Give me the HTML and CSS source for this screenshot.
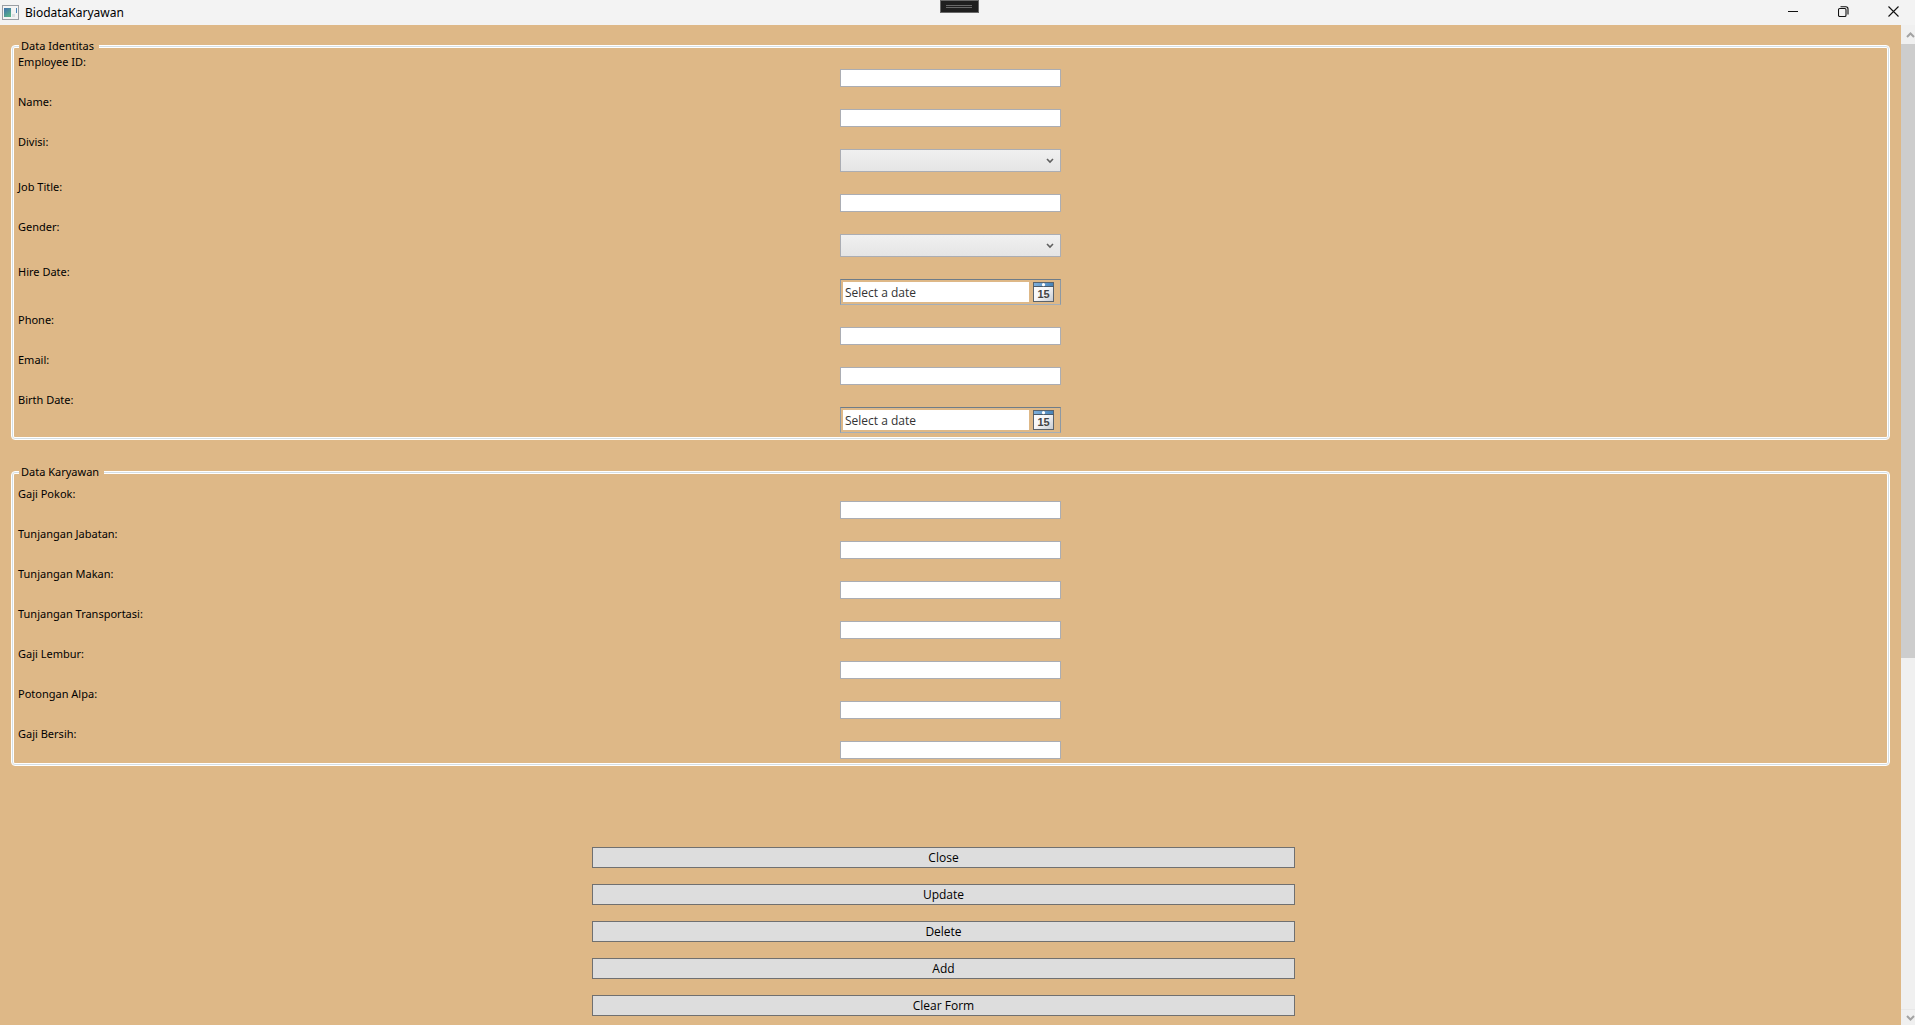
FILE: index.html
```html
<!DOCTYPE html>
<html lang="id">
<head>
<meta charset="utf-8">
<title>BiodataKaryawan</title>
<link rel="stylesheet" href="styles.css">
</head>
<body>
<div class="window">
  <header class="titlebar">
    <svg class="app-icon" width="17" height="15" viewBox="0 0 17 15" aria-hidden="true">
      <defs><linearGradient id="app" x1="0" y1="0" x2="0.6" y2="1"><stop offset="0" stop-color="#3f6fae"/><stop offset="1" stop-color="#56b08a"/></linearGradient></defs>
      <rect x=".5" y=".5" width="16" height="14" fill="#f4f4f4" stroke="#9a9ea3"/>
      <rect x="2" y="3" width="7" height="9" fill="url(#app)"/>
      <rect x="10" y="9" width="3" height="3" fill="#dcdfe2"/>
      <rect x="14" y="3" width="1" height="5" fill="#4a86b8"/>
    </svg>
    <h1 class="title">BiodataKaryawan</h1>
    <div class="debug-tab" aria-hidden="true"></div>
    <div class="captions">
      <button type="button" class="caption" aria-label="Minimize"><svg width="11" height="11" viewBox="0 0 11 11"><path d="M0 5.5h10" stroke="#111" fill="none"/></svg></button>
      <button type="button" class="caption" aria-label="Restore"><svg width="11" height="11" viewBox="0 0 11 11"><g stroke="#111" fill="none" stroke-width="1.1"><rect x=".5" y="2.5" width="7.5" height="8" rx="1.2"/><path d="M2.5 .7h5.3a2.2 2.2 0 0 1 2.2 2.2v5.6"/></g></svg></button>
      <button type="button" class="caption" aria-label="Close window"><svg width="11" height="11" viewBox="0 0 11 11"><path d="M.5.5l10 10M10.500.5l-10 10" stroke="#111" stroke-width="1.1" fill="none"/></svg></button>
    </div>
  </header>
  <div class="body">
    <main class="content">
      <form class="form">
        <fieldset class="group">
          <legend class="legend">Data Identitas</legend>
          <div class="field"><label for="emp">Employee ID:</label><input class="box" id="emp" type="text"></div>
          <div class="field"><label for="name">Name:</label><input class="box" id="name" type="text"></div>
          <div class="field"><label for="div">Divisi:</label><select class="combo" id="div"><option></option></select></div>
          <div class="field"><label for="job">Job Title:</label><input class="box" id="job" type="text"></div>
          <div class="field"><label for="gender">Gender:</label><select class="combo" id="gender"><option></option></select></div>
          <div class="field"><label for="hire">Hire Date:</label>
            <div class="date"><input class="date-text" id="hire" type="text" placeholder="Select a date">
              <button type="button" class="date-button" aria-label="Show calendar"><svg width="21" height="20" viewBox="0 0 21 20"><use href="#calendar"/></svg><span class="day">15</span></button></div></div>
          <div class="field"><label for="phone">Phone:</label><input class="box" id="phone" type="text"></div>
          <div class="field"><label for="email">Email:</label><input class="box" id="email" type="text"></div>
          <div class="field"><label for="birth">Birth Date:</label>
            <div class="date"><input class="date-text" id="birth" type="text" placeholder="Select a date">
              <button type="button" class="date-button" aria-label="Show calendar"><svg width="21" height="20" viewBox="0 0 21 20"><use href="#calendar"/></svg><span class="day">15</span></button></div></div>
        </fieldset>
        <fieldset class="group pay">
          <legend class="legend">Data Karyawan</legend>
          <div class="field"><label for="pokok">Gaji Pokok:</label><input class="box" id="pokok" type="text"></div>
          <div class="field"><label for="jabatan">Tunjangan Jabatan:</label><input class="box" id="jabatan" type="text"></div>
          <div class="field"><label for="makan">Tunjangan Makan:</label><input class="box" id="makan" type="text"></div>
          <div class="field"><label for="transport">Tunjangan Transportasi:</label><input class="box" id="transport" type="text"></div>
          <div class="field"><label for="lembur">Gaji Lembur:</label><input class="box" id="lembur" type="text"></div>
          <div class="field"><label for="alpa">Potongan Alpa:</label><input class="box" id="alpa" type="text"></div>
          <div class="field"><label for="bersih">Gaji Bersih:</label><input class="box" id="bersih" type="text"></div>
        </fieldset>
        <div class="actions">
          <button type="button" class="action">Close</button>
          <button type="button" class="action">Update</button>
          <button type="button" class="action">Delete</button>
          <button type="button" class="action">Add</button>
          <button type="button" class="action">Clear Form</button>
        </div>
      </form>
    </main>
    <div class="scrollbar" aria-hidden="true">
      <div class="arrow"><svg width="9" height="6" viewBox="0 0 9 6"><path d="M1 5l3.500-3.500L8 5" stroke="#a3a3a3" stroke-width="2" fill="none"/></svg></div>
      <div class="track"><div class="thumb"></div></div>
      <div class="arrow down"><svg width="9" height="6" viewBox="0 0 9 6"><path d="M1 1l3.500 3.500L8 1" stroke="#a3a3a3" stroke-width="2" fill="none"/></svg></div>
    </div>
  </div>
</div>
<svg class="defs" width="0" height="0" aria-hidden="true">
  <defs>
    <linearGradient id="page" x1="0" y1="0" x2="1" y2="1"><stop offset="0" stop-color="#fff"/><stop offset=".5" stop-color="#f6f6f7"/><stop offset="1" stop-color="#c4c8d0"/></linearGradient>
    <linearGradient id="band" x1="0" y1="0" x2="1" y2="0"><stop offset="0" stop-color="#7fb0dc"/><stop offset="1" stop-color="#4682b8"/></linearGradient>
    <g id="calendar">
      <rect x=".5" y=".5" width="20" height="19" fill="url(#page)" stroke="#5a636c"/>
      <rect x="1" y="1" width="19" height="3" fill="url(#band)"/>
      <rect x="0" y="4" width="21" height="1" fill="#4b5a68"/>
      <circle cx="10.500" cy="2.700" r="1.600" fill="#fff"/>
    </g>
  </defs>
</svg>
</body>
</html>
```
FILE: styles.css
```css
* { box-sizing: border-box; }

body {
  margin: 0;
  font-family: "Noto Sans", "Open Sans", sans-serif;
  font-size: 12px;
  line-height: 15px;
  color: #000;
}

button, input, select { font: inherit; color: inherit; margin: 0; }

.defs { position: absolute; }

.window { display: flex; flex-direction: column; height: 100vh; overflow: hidden; }

.titlebar {
  position: relative;
  display: flex;
  align-items: center;
  height: 25px;
  flex: none;
  padding-left: 2px;
  background: #f3f3f3;
}
.title { margin: 0 0 0 6px; font-size: 12px; font-weight: 400; }
.debug-tab {
  position: absolute;
  top: 0;
  left: 50%;
  width: 39px;
  height: 13px;
  margin-left: -18px;
  border: 1px solid #686868;
  background:
    linear-gradient(#686868, #686868) 5px 4px / 26px 1px no-repeat,
    linear-gradient(#686868, #686868) 5px 6px / 26px 1px no-repeat,
    #1f1f1f;
}
.captions { display: flex; margin: 0 -3px 0 auto; height: 100%; }
.caption {
  display: grid;
  place-items: center;
  width: 50px;
  padding: 0 0 3px;
  border: 0;
  background: none;
}

.body { display: flex; flex: 1; min-height: 0; }
.content { flex: 1; overflow: hidden; background: #deb887; }
.form { padding: 13px 11px 0; }

.group {
  display: block;
  min-width: 0;
  margin: 0 0 24px;
  padding: 0 6px 6px;
  border: 1px solid #fff;
  border-radius: 4px;
  box-shadow: inset 0 0 0 1px #d5dfe5, inset 0 0 0 2px #fff;
}
.pay { margin-bottom: 81px; }
.legend { margin: 0 0 1px 1px; padding: 0 5px 0 2px; font-size: 11px; background: #deb887; }
.pay .legend { margin-bottom: 7px; }

.field { display: flex; flex-direction: column; }
.field + .field { margin-top: 7px; }
.field label { align-self: flex-start; font-size: 11px; }
.box, .combo, .date { align-self: center; width: 221px; border: 1px solid #abadb3; }
.box { height: 18px; padding: 0 2px; background: #fff; }
.combo {
  height: 23px;
  padding: 0 20px 0 4px;
  appearance: none;
  border-radius: 0;
  background:
    url("data:image/svg+xml,%3Csvg xmlns='http://www.w3.org/2000/svg' width='8' height='6'%3E%3Cpath d='M1 1l3 3 3-3' fill='none' stroke='%23606060' stroke-width='1.600'/%3E%3C/svg%3E") right 6px center no-repeat,
    linear-gradient(#f0f0f0, #e5e5e5);
}
.date {
  display: flex;
  align-items: center;
  gap: 4px;
  height: 26px;
  padding: 0 6px 0 2px;
  border-color: #6f7c88 #8d99a4 #a3aeb9;
}
.date-text { flex: 1; min-width: 0; height: 20px; padding: 0 2px; border: 0; background: #fff; color: #333; font-family: "Open Sans", sans-serif; }
.date-text::placeholder { color: #333; opacity: 1; }
.date-button { position: relative; width: 21px; height: 20px; padding: 0; border: 0; background: none; }
.date-button svg { display: block; }
.day { position: absolute; inset: 5px 0 0; font: bold 11px/15px "Liberation Sans", sans-serif; color: #444; text-align: center; }

.actions {
  display: flex;
  flex-direction: column;
  align-items: center;
  gap: 16px;
  padding-right: 14px;
}
.action {
  width: 37.7%;
  height: 21px;
  padding: 0;
  border: 1px solid #707070;
  background: #ddd;
  font-family: "Open Sans", sans-serif;
}

.scrollbar { display: flex; flex-direction: column; width: 14px; flex: none; overflow: hidden; background: #f0f0f0; }
.arrow { display: grid; place-items: center; width: 19px; height: 19px; flex: none; }
.down { height: 16px; border-top: 1px solid #e8e8e8; }
.track { flex: 1; }
.thumb { height: 63.6%; background: #cdcdcd; }
```
